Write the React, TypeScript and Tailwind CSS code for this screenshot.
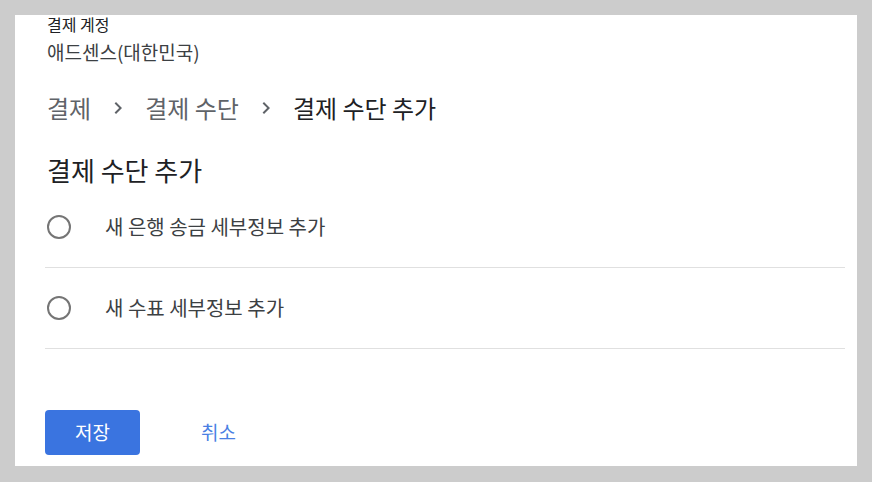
import React from 'react';

const FONT = { fontFamily: '"Noto Sans CJK KR", "Noto Sans", sans-serif' };

const Chevron = () => (
  <svg viewBox="0 0 24 24" className="w-6 h-6 mx-[15px] shrink-0" fill="#5f6368">
    <path d="M10 6L8.59 7.41 13.17 12l-4.58 4.59L10 18l6-6z" />
  </svg>
);

const Radio = () => (
  <svg viewBox="0 0 24 24" className="w-6 h-6 ml-[2px] shrink-0" fill="none">
    <circle cx="12" cy="12" r="11" stroke="#757575" strokeWidth="2" />
  </svg>
);

const OPTIONS = ['새 은행 송금 세부정보 추가', '새 수표 세부정보 추가'];

export default function App() {
  return (
    <div className="w-[872px] h-[482px] bg-[#cccccc] p-[15px]" style={FONT}>
      <div className="bg-white h-[451px] w-[842px] overflow-hidden pl-[30px] pr-[12px]">
        <div className="ml-[2px] pt-[1px] text-[16px] leading-[17px] text-[#202124]">결제 계정</div>
        <div className="ml-[2px] mt-[7px] text-[19px] leading-[24px] text-[#3c4043]">애드센스(대한민국)</div>

        <div className="ml-[2px] mt-[29px] flex items-center h-[30px] text-[24px] leading-[30px]">
          <span className="text-[#5f6368]">결제</span>
          <Chevron />
          <span className="text-[#5f6368]">결제 수단</span>
          <Chevron />
          <span className="text-[#202124]">결제 수단 추가</span>
        </div>

        <h2 className="ml-[2px] mt-[31px] text-[26px] leading-[32px] text-[#202124] font-normal">결제 수단 추가</h2>

        <div className="mt-[1px]">
          {OPTIONS.map((o) => (
            <div key={o} className="h-[81px] flex items-center border-b border-[#e0e0e0]">
              <Radio />
              <span className="ml-[34px] text-[20px] leading-[24px] text-[#3c4043]">{o}</span>
            </div>
          ))}
        </div>

        <div className="mt-[61px] flex items-center">
          <button className="w-[95px] h-[45px] rounded-[4px] bg-[#3a74e0] text-white text-[19px]">저장</button>
          <button className="ml-[61px] text-[19px] text-[#4a7fe3]">취소</button>
        </div>
      </div>
    </div>
  );
}
